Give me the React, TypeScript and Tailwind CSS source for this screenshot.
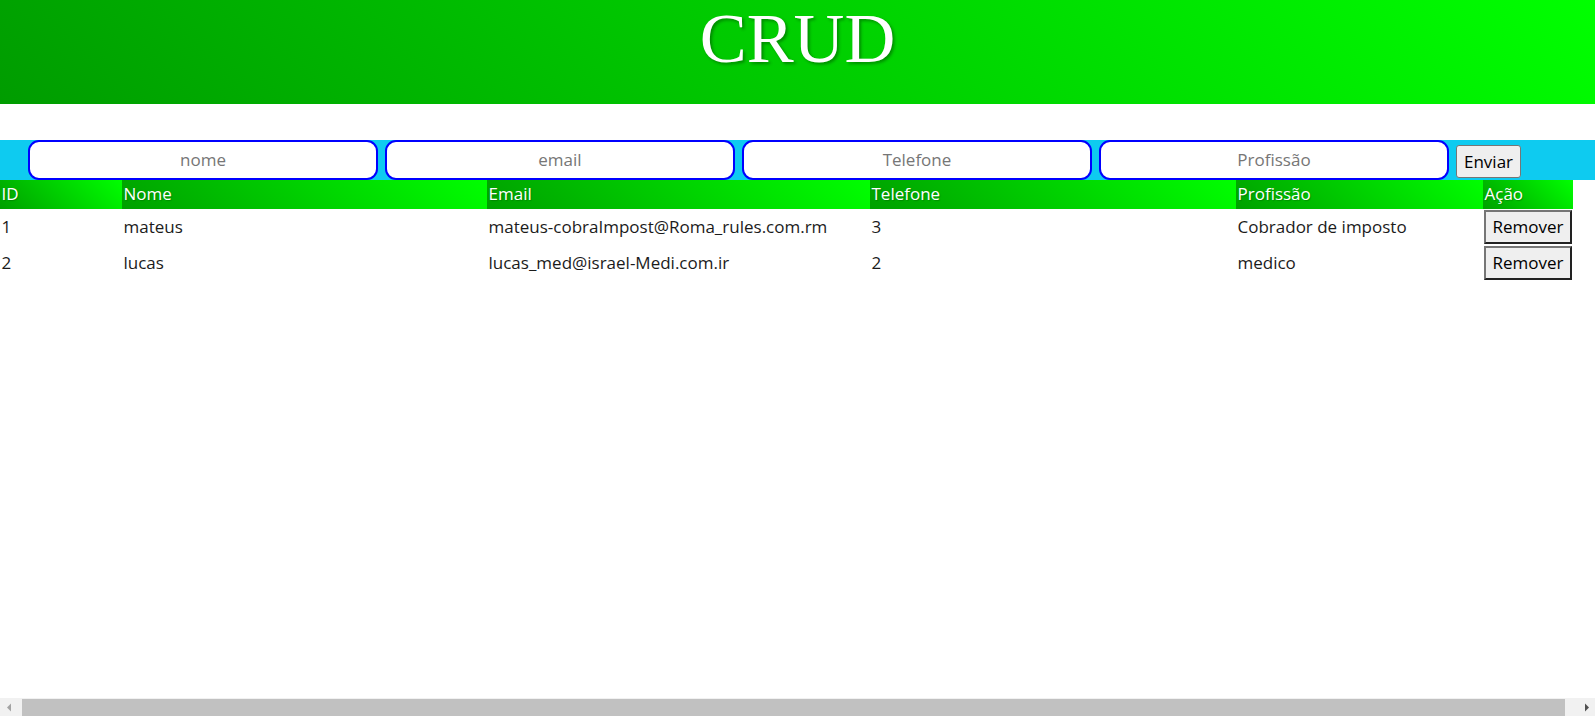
import React from "react";

type Pessoa = {
  id: number;
  nome: string;
  email: string;
  telefone: string;
  profissao: string;
};

const pessoas: Pessoa[] = [
  {
    id: 1,
    nome: "mateus",
    email: "mateus-cobraImpost@Roma_rules.com.rm",
    telefone: "3",
    profissao: "Cobrador de imposto",
  },
  {
    id: 2,
    nome: "lucas",
    email: "lucas_med@israel-Medi.com.ir",
    telefone: "2",
    profissao: "medico",
  },
];

const font = "font-['Open_Sans',sans-serif]";

const thClass =
  "h-[29px] p-0 pl-[1.5px] text-left font-normal text-white bg-linear-45/srgb from-[#00a000] to-[#00ff00] [text-shadow:1px_1px_1px_rgba(0,80,0,0.35)]";

const tdClass = "py-[1px] pl-[1.5px]";

const App: React.FC = () => {
  return (
    <div className={`min-h-screen bg-white text-[17px] text-[#1b1b1b] ${font}`}>
      {/* topo */}
      <header className="h-[104px] bg-linear-45/srgb from-[#009c00] to-[#00ff00]">
        <h1 className="text-center font-['Liberation_Serif',serif] text-[70.4px] leading-[77px] text-white [text-shadow:2px_2px_3px_rgba(0,60,0,0.45)]">
          CRUD
        </h1>
      </header>

      {/* formulario */}
      <form
        className="mt-[36px] flex h-[39.5px] items-center gap-[7px] bg-[#0ecbf0] pl-[28px]"
        onSubmit={(e) => e.preventDefault()}
      >
        {["nome", "email", "Telefone", "Profissão"].map((p) => (
          <input
            key={p}
            placeholder={p}
            className="h-[39.5px] w-[350px] rounded-[11px] border-2 border-[#0000ff] bg-white text-center text-[17px] outline-none placeholder:text-[#767676]"
          />
        ))}
        <button
          type="submit"
          className="mt-[3px] h-[33px] rounded-[3px] border border-[#767676] bg-[#efefef] px-[7px] text-[17px] text-black"
        >
          Enviar
        </button>
      </form>

      {/* tabela */}
      <table className="w-[1573px] table-fixed border-collapse">
        <thead>
          <tr>
            <th className={`${thClass} w-[122px]`}>ID</th>
            <th className={`${thClass} w-[365px]`}>Nome</th>
            <th className={`${thClass} w-[383px]`}>Email</th>
            <th className={`${thClass} w-[366px]`}>Telefone</th>
            <th className={`${thClass} w-[247px]`}>Profissão</th>
            <th className={`${thClass} w-[90px]`}>Ação</th>
          </tr>
        </thead>
        <tbody>
          {pessoas.map((p) => (
            <tr key={p.id}>
              <td className={tdClass}>{p.id}</td>
              <td className={tdClass}>{p.nome}</td>
              <td className={tdClass}>{p.email}</td>
              <td className={tdClass}>{p.telefone}</td>
              <td className={tdClass}>{p.profissao}</td>
              <td className="py-[1px] pl-[1px]">
                <button className="block h-[34px] w-[88px] border-2 border-t-[#767676] border-l-[#767676] border-b-[#222] border-r-[#222] bg-[#efefef] text-[17px] text-black">
                  Remover
                </button>
              </td>
            </tr>
          ))}
        </tbody>
      </table>

      {/* barra de rolagem horizontal */}
      <div className="fixed bottom-0 left-0 flex h-[18px] w-full items-stretch bg-[#f1f1f1] pt-[1px]">
        <div className="flex w-[17px] items-center justify-center">
          <svg width="6" height="9" viewBox="0 0 6 9">
            <path d="M5 0.5 L1 4.5 L5 8.5 Z" fill="#a3a3a3" />
          </svg>
        </div>
        <div className="ml-[5px] w-[1543px] bg-[#c1c1c1]" />
        <div className="flex-1" />
        <div className="flex w-[17px] items-center justify-center">
          <svg width="6" height="9" viewBox="0 0 6 9">
            <path d="M1 0.5 L5 4.5 L1 8.5 Z" fill="#505050" />
          </svg>
        </div>
      </div>
    </div>
  );
};

export default App;
